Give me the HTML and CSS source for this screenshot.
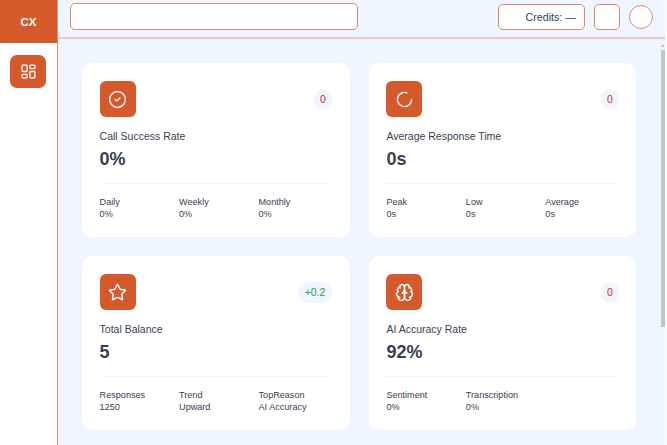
FILE: index.html
```html
<!DOCTYPE html>
<html lang="en">
<head>
<meta charset="utf-8">
<title>CX Dashboard</title>
<link rel="stylesheet" href="styles.css">
</head>
<body>
<div class="app">
  <aside class="sidebar">
    <div class="logo">CX</div>
    <nav class="nav">
      <a class="nav-btn">
        <svg class="ico-nav" viewBox="0 0 24 24"><rect x="3" y="3" width="7" height="9" rx="1"/><rect x="14" y="3" width="7" height="5" rx="1"/><rect x="14" y="12" width="7" height="9" rx="1"/><rect x="3" y="16" width="7" height="5" rx="1"/></svg>
      </a>
    </nav>
  </aside>
  <div class="content">
    <header class="topbar">
      <div class="search"></div>
      <div class="credits">Credits: —</div>
      <div class="square"></div>
      <div class="avatar"></div>
    </header>
    <main class="main">
      <div class="grid">
        <section class="card">
          <div class="card-head">
            <div class="icon"><svg viewBox="0 0 24 24"><circle cx="12" cy="12" r="10"/><path d="m9 12 2 2 4-4"/></svg></div>
            <span class="badge neg">0</span>
          </div>
          <div class="label">Call Success Rate</div>
          <div class="value">0%</div>
          <div class="stats">
            <div><div>Daily</div><div>0%</div></div>
            <div><div>Weekly</div><div>0%</div></div>
            <div><div>Monthly</div><div>0%</div></div>
          </div>
        </section>
        <section class="card">
          <div class="card-head">
            <div class="icon"><svg viewBox="0 0 24 24"><path d="M21 12a9 9 0 1 1-6.219-8.56"/></svg></div>
            <span class="badge neg">0</span>
          </div>
          <div class="label">Average Response Time</div>
          <div class="value">0s</div>
          <div class="stats">
            <div><div>Peak</div><div>0s</div></div>
            <div><div>Low</div><div>0s</div></div>
            <div><div>Average</div><div>0s</div></div>
          </div>
        </section>
        <section class="card">
          <div class="card-head">
            <div class="icon"><svg viewBox="0 0 24 24"><path d="M11.525 2.295a.53.53 0 0 1 .95 0l2.31 4.679a2.123 2.123 0 0 0 1.595 1.16l5.166.756a.53.53 0 0 1 .294.904l-3.736 3.638a2.123 2.123 0 0 0-.611 1.878l.882 5.14a.53.53 0 0 1-.771.56l-4.618-2.428a2.122 2.122 0 0 0-1.973 0L6.396 21.01a.53.53 0 0 1-.77-.56l.881-5.139a2.122 2.122 0 0 0-.611-1.879L2.16 9.795a.53.53 0 0 1 .294-.906l5.165-.755a2.122 2.122 0 0 0 1.597-1.16z"/></svg></div>
            <span class="badge pos">+0.2</span>
          </div>
          <div class="label">Total Balance</div>
          <div class="value">5</div>
          <div class="stats">
            <div><div>Responses</div><div>1250</div></div>
            <div><div>Trend</div><div>Upward</div></div>
            <div><div>TopReason</div><div>AI Accuracy</div></div>
          </div>
        </section>
        <section class="card">
          <div class="card-head">
            <div class="icon"><svg viewBox="0 0 24 24"><path d="M12 5a3 3 0 1 0-5.997.125 4 4 0 0 0-2.526 5.77 4 4 0 0 0 .556 6.588A4 4 0 1 0 12 18Z"/><path d="M12 5a3 3 0 1 1 5.997.125 4 4 0 0 1 2.526 5.77 4 4 0 0 1-.556 6.588A4 4 0 1 1 12 18Z"/><path d="M15 13a4.5 4.5 0 0 1-3-4 4.5 4.5 0 0 1-3 4"/><path d="M17.599 6.5a3 3 0 0 0 .399-1.375"/><path d="M6.003 5.125A3 3 0 0 0 6.401 6.5"/><path d="M3.477 10.896a4 4 0 0 1 .585-.396"/><path d="M19.938 10.5a4 4 0 0 1 .585.396"/><path d="M6 18a4 4 0 0 1-1.967-.516"/><path d="M19.967 17.484A4 4 0 0 1 18 18"/></svg></div>
            <span class="badge neg">0</span>
          </div>
          <div class="label">AI Accuracy Rate</div>
          <div class="value">92%</div>
          <div class="stats">
            <div><div>Sentiment</div><div>0%</div></div>
            <div><div>Transcription</div><div>0%</div></div>
          </div>
        </section>
      </div>
      <div class="scrollbar"><span class="scroll-arrow"></span><span class="scroll-thumb"></span></div>
    </main>
  </div>
</div>
</body>
</html>
```
FILE: styles.css
```css
* { box-sizing: border-box; }
html, body { margin: 0; height: 100%; overflow: hidden; }
body { font-family: "Liberation Sans", Arial, sans-serif; color: #374151; background: #fbfcfe; }
.app { display: flex; width: 665px; height: 445px; background: #eff6ff; }
.sidebar { width: 58px; flex: none; background: #fff; border-right: 1px solid #e08d72; }
.logo { height: 43px; background: #d45a2c; color: #fff; font-weight: 700; font-size: 11.5px; display: flex; align-items: center; justify-content: center; }
.nav { padding: 12px 11px 0 10px; }
.nav-btn { display: flex; width: 36px; height: 33px; border-radius: 7px; background: #d45a2c; align-items: center; justify-content: center; }
.ico-nav { width: 17px; height: 17px; fill: none; stroke: #fff; stroke-width: 1.8; }
.content { flex: 1; min-width: 0; display: flex; flex-direction: column; }
.topbar { height: 39px; flex: none; display: flex; align-items: flex-start; padding: 3px 12px 0 12px; border-bottom: 2px solid #edcbc3; }
.search { width: 288px; height: 27px; background: #fff; border: 1px solid #de8a70; border-radius: 5px; margin-right: auto; }
.credits { width: 87px; height: 26px; margin-top: 1px; background: #fff; border: 1px solid #e2866a; border-radius: 5px; font-size: 10.7px; color: #374151; display: flex; align-items: center; justify-content: flex-end; padding-right: 8px; }
.square { width: 26px; height: 26px; margin: 1px 0 0 9px; background: #fff; border: 1px solid #e2866a; border-radius: 5px; }
.avatar { width: 24px; height: 24px; margin: 2px 0 0 9px; background: #fff; border: 1px solid #e2866a; border-radius: 50%; }
.main { position: relative; flex: 1; min-height: 0; padding: 24px 28.6px 0 24px; overflow: hidden; }
.scrollbar { position: absolute; top: 0; right: 0; bottom: 0; width: 5px; }
.scroll-arrow { position: absolute; top: 5px; left: 1px; border: 2px solid transparent; border-top: 0; border-bottom: 3px solid #b9bdc4; }
.scroll-thumb { position: absolute; top: 11px; left: 1px; width: 4px; height: 277px; background: #c1c5cc; }
.grid { display: grid; grid-template-columns: 1fr 1fr; gap: 19.2px; }
.card { height: 174px; background: #fff; border-radius: 10px; padding: 18px 17.6px 0; display: flex; flex-direction: column; }
.card-head { display: flex; justify-content: space-between; align-items: center; height: 36px; }
.icon { width: 36px; height: 36px; border-radius: 6px; background: #d45a2c; display: flex; align-items: center; justify-content: center; }
.icon svg { width: 19px; height: 19px; fill: none; stroke: #fff; stroke-width: 1.8; stroke-linecap: round; stroke-linejoin: round; }
.badge { height: 21px; min-width: 18px; padding: 0 5px; border-radius: 11px; background: #eff6ff; font-size: 10.5px; display: flex; align-items: center; justify-content: center; }
.neg { color: #dc2626; }
.pos { color: #16a34a; width: 34px; padding: 0; }
.label { margin-top: 12px; font-size: 10.5px; line-height: 14px; color: #374151; }
.value { margin-top: 5px; font-size: 18px; line-height: 22px; font-weight: 700; color: #374151; }
.stats { margin-top: 13px; padding-top: 12px; border-top: 1px solid #f5f5f6; display: grid; grid-template-columns: repeat(3, 1fr); column-gap: 6px; font-size: 9.1px; line-height: 12px; color: #374151; }
```
